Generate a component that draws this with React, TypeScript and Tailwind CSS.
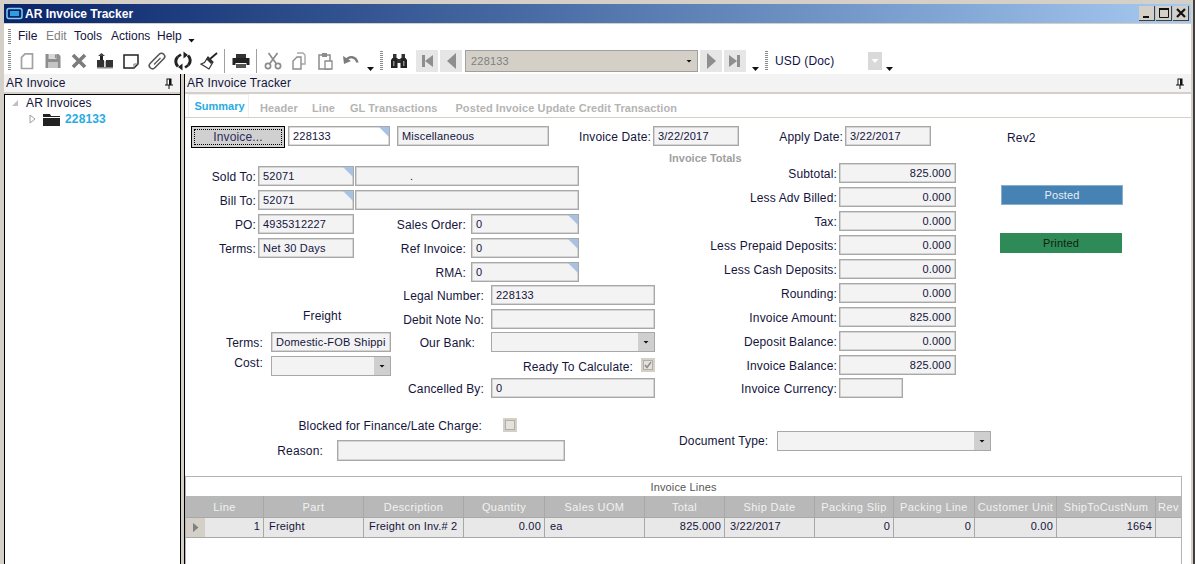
import React from "react";

const grip = (
  <div className="w-[3px] h-[20px] shrink-0 bg-[repeating-linear-gradient(to_bottom,#8a8a8a_0,#8a8a8a_1px,#ffffff_1px,#ffffff_2px)]" />
);

const Ico = ({ children }: { children: React.ReactNode }) => (
  <div className="w-[26px] h-[26px] shrink-0 flex items-center justify-center">
    <svg width="20" height="20" viewBox="0 0 20 20">{children}</svg>
  </div>
);

const MiniArrow = () => (
  <div className="w-[7px] h-[4px] shrink-0 self-end mb-[3px] [clip-path:polygon(0_0,100%_0,50%_100%)] bg-[#111]" />
);

const Sep = () => <div className="w-px h-[24px] shrink-0 bg-[#a0a0a0]" />;

const NavBtn = ({ children }: { children: React.ReactNode }) => (
  <div className="w-[22px] h-[22px] bg-[#e6e6e6] flex items-center justify-center shrink-0">
    <svg width="20" height="20" viewBox="0 0 20 20">{children}</svg>
  </div>
);

function Toolbar() {
  return (
    <div className="h-[28px] shrink-0 flex items-center bg-white pl-[4px] pt-[2px]">
      {grip}
      <div className="w-[3px] shrink-0" />
      <Ico><path d="M8 2.800h7.500v14.700H4.500V6.300z" fill="#fff" stroke="#a2a2a2" strokeWidth="1.700" /></Ico>
      <Ico>
        <path d="M2.500 3h13l2 2v12h-15z" fill="#8e8e8e" />
        <rect x="5.500" y="3" width="8" height="5" fill="#d8d8d8" />
        <rect x="12" y="3.500" width="1.500" height="3.500" fill="#8e8e8e" />
        <rect x="5" y="11" width="10" height="6" fill="#c4c4c4" />
      </Ico>
      <Ico><path d="M4 4l12 12M16 4L4 16" stroke="#7c7c7c" strokeWidth="3.600" /></Ico>
      <Ico>
        <path d="M2 9h7v8H2zM11 9h7v8h-7z" fill="#333" />
        <path d="M5 4h3v5H5z" fill="#222" />
        <path d="M3 5l3.500-3L10 5z" fill="#444" />
        <path d="M2 16h16v1.500H2z" fill="#888" />
        <path d="M9.500 10h1.500v6H9.500z" fill="#bbb" />
      </Ico>
      <Ico>
        <path d="M3 4h14v9l-4 4H3z" fill="#fff" stroke="#222" strokeWidth="1.500" />
        <path d="M13 17v-4h4" fill="none" stroke="#777" strokeWidth="1" />
      </Ico>
      <Ico>
        <rect x="6.800" y="0.500" width="6.400" height="19" rx="3.200" transform="rotate(45 10 10)" fill="none" stroke="#555" strokeWidth="1.600" />
        <path d="M7 13.500l6.500-6.500" stroke="#555" strokeWidth="1.300" />
      </Ico>
      <Ico>
        <path d="M5 15.500A6.800 6.800 0 0 1 4.500 6" fill="none" stroke="#222" strokeWidth="3" />
        <path d="M4.500 6L8 3.500" fill="none" stroke="#222" strokeWidth="2.400" />
        <path d="M10.500 0.500l4.500 3.500-4.500 3.500z" fill="#222" />
        <path d="M15 4.500A6.800 6.800 0 0 1 15.500 14" fill="none" stroke="#222" strokeWidth="3" />
        <path d="M15.500 14L12 16.500" fill="none" stroke="#222" strokeWidth="2.400" />
        <path d="M9.500 19.500L5 16l4.500-3.500z" fill="#222" />
      </Ico>
      <Ico>
        <path d="M11 8l7-6" stroke="#222" strokeWidth="1.800" />
        <path d="M9 6l5 5-4 7-8-5 3.500-1.500z" fill="#fff" stroke="#333" strokeWidth="1.200" />
        <path d="M9 6l5 5-2 2-5-5z" fill="#333" />
      </Ico>
      <div className="w-[2px] shrink-0" />
      <Sep />
      <div className="w-[3px] shrink-0" />
      <Ico>
        <path d="M5 3h10v4H5z" fill="#333" />
        <path d="M1.500 7h17v7h-3v-2h-11v2h-3z" fill="#222" />
        <path d="M5 13h10v4H5z" fill="#555" />
      </Ico>
      <div className="w-[2px] shrink-0" />
      <Sep />
      <div className="w-[3px] shrink-0" />
      <Ico>
        <path d="M5.500 2l8 11M14.500 2l-8 11" stroke="#8c8c8c" strokeWidth="1.700" />
        <circle cx="5" cy="15" r="2.600" fill="none" stroke="#8c8c8c" strokeWidth="1.700" />
        <circle cx="15" cy="15" r="2.600" fill="none" stroke="#8c8c8c" strokeWidth="1.700" />
      </Ico>
      <Ico>
        <path d="M8 2h6l2 2v9h-4" fill="#fff" stroke="#a8a8a8" strokeWidth="1.400" />
        <path d="M8 6L4 10v8h8V6z" fill="#fff" stroke="#8c8c8c" strokeWidth="1.400" />
      </Ico>
      <Ico>
        <path d="M4 4h11v14H4z" fill="#fff" stroke="#8c8c8c" strokeWidth="1.500" />
        <path d="M7 2h5v4H7z" fill="#8c8c8c" />
        <path d="M10 10h7v8h-7z" fill="#fff" stroke="#8c8c8c" strokeWidth="1.300" />
      </Ico>
      <Ico>
        <path d="M5 9.500c3-5 9.500-4.500 11.500 2" fill="none" stroke="#7c7c7c" strokeWidth="2.400" />
        <path d="M2 5l1 8 7-3z" fill="#7c7c7c" />
      </Ico>
      <div className="w-[3px] shrink-0" />
      <MiniArrow />
      <div className="w-[6px] shrink-0" />
      {grip}
      <div className="w-[3px] shrink-0" />
      <Ico>
        <path d="M2 9l1.500-2h5V17H2zM11.500 7h5L18 9v8h-6.500z" fill="#222" />
        <path d="M4 3h3.500v4H4zM12.500 3H16v4h-3.500zM8 8h4v4H8z" fill="#333" />
        <path d="M4 10h1.500v5H4zM14 10h1.500v5H14z" fill="#8a8a8a" />
      </Ico>
      <div className="w-[4px] shrink-0" />
      <NavBtn><path d="M5 4h3v12H5zM16 4v12l-8-6z" fill="#8e8e8e" /></NavBtn>
      <div className="w-[2px] shrink-0" />
      <NavBtn><path d="M15 2v16L6 10z" fill="#8e8e8e" /></NavBtn>
      <div className="ml-[3px] w-[233px] h-[22px] shrink-0 bg-[#d4d0c8] border border-[#a0a0a0] flex items-center pl-[5px] pr-[5px] text-[11px] tracking-[0.2px] text-[#808080]">
        <span className="flex-1">228133</span>
        <div className="w-[6px] h-[3px] [clip-path:polygon(0_0,100%_0,50%_100%)] bg-[#111]" />
      </div>
      <div className="w-[2px] shrink-0" />
      <NavBtn><path d="M6 2v16l9-8z" fill="#8e8e8e" /></NavBtn>
      <div className="w-[2px] shrink-0" />
      <NavBtn><path d="M4 4v12l8-6zM12 4h3v12h-3z" fill="#8e8e8e" /></NavBtn>
      <div className="w-[6px] shrink-0" />
      <MiniArrow />
      <div className="w-[6px] shrink-0" />
      {grip}
      <span className="ml-[7px] w-[93px] shrink-0 text-[#10104a]">USD (Doc)</span>
      <div className="w-[14px] h-[18px] shrink-0 bg-[#d9d9d9] flex items-center justify-center">
        <div className="w-[7px] h-[4px] [clip-path:polygon(0_0,100%_0,50%_100%)] bg-white" />
      </div>
      <div className="w-[4px] shrink-0" />
      <MiniArrow />
    </div>
  );
}

const Pin = () => (
  <svg width="8" height="11" viewBox="0 0 8 11" className="shrink-0">
    <path d="M1.500 0.500h5v6h-5zM0 6.500h8v1H0zM3.500 7.500h1V11h-1z" fill="#111" />
    <path d="M2.500 1.500h1.500v5H2.500z" fill="#fff" />
  </svg>
);

function Field({ v, w, corner, h = 20, white, right, indent = 4 }: { v?: string; w: number; corner?: boolean; h?: number; white?: boolean; right?: boolean; indent?: number }) {
  return (
    <div
      className={`relative shrink-0 border border-[#a8a8a8] shadow-[inset_0_0_0_0.5px_#b8b8b8] flex items-center pr-[4px] text-[11px] tracking-[0.2px] text-[#14143c] overflow-hidden whitespace-nowrap ${white ? "bg-white" : "bg-[#f3f3f3]"} ${right ? "justify-end" : ""}`}
      style={{ width: w, height: h, paddingLeft: indent }}
    >
      {v}
      {corner && <div className="absolute top-0 right-0 w-[10px] h-[10px] bg-[#a9c1e2] [clip-path:polygon(0_0,100%_0,100%_100%)]" />}
    </div>
  );
}

function Combo({ w }: { w: number }) {
  return (
    <div className="shrink-0 h-[20px] border border-[#a8a8a8] bg-[#f3f3f3] flex justify-end" style={{ width: w }}>
      <div className="w-[16px] bg-[#cfcfcf] flex items-center justify-center">
        <div className="w-[6px] h-[3px] [clip-path:polygon(0_0,100%_0,50%_100%)] bg-[#111]" />
      </div>
    </div>
  );
}

function Row({ label, lw, pr = 2, children, cls = "" }: { label: string; lw: number; pr?: number; children: React.ReactNode; cls?: string }) {
  return (
    <div className={`flex items-center h-[20px] ${cls}`}>
      <span className="text-right shrink-0 whitespace-nowrap text-[#14143c] pt-[2px]" style={{ width: lw, paddingRight: pr }}>{label}</span>
      {children}
    </div>
  );
}

const Check = ({ checked }: { checked?: boolean }) => (
  <div className="w-[14px] h-[14px] bg-[#d4d0c8] flex items-center justify-center shrink-0">
    <div className="w-[10px] h-[10px] bg-[#e4e2dc] border border-[#b0aea8] flex items-center justify-center">
      {checked && (
        <svg width="8" height="8" viewBox="0 0 8 8"><path d="M1 4l2 2.500L7 1" fill="none" stroke="#8e8e8e" strokeWidth="1.600" /></svg>
      )}
    </div>
  </div>
);

const TOTALS: [string, string][] = [
  ["Subtotal:", "825.000"],
  ["Less Adv Billed:", "0.000"],
  ["Tax:", "0.000"],
  ["Less Prepaid Deposits:", "0.000"],
  ["Less Cash Deposits:", "0.000"],
  ["Rounding:", "0.000"],
  ["Invoice Amount:", "825.000"],
  ["Deposit Balance:", "0.000"],
  ["Invoice Balance:", "825.000"],
];

const COLS: [string, number, string, boolean][] = [
  ["Line", 59, "1", true],
  ["Part", 100, "Freight", false],
  ["Description", 100, "Freight on Inv.# 2", false],
  ["Quantity", 81, "0.00", true],
  ["Sales UOM", 100, "ea", false],
  ["Total", 80, "825.000", true],
  ["Ship Date", 90, "3/22/2017", false],
  ["Packing Slip", 79, "0", true],
  ["Packing Line", 81, "0", true],
  ["Customer Unit", 82, "0.00", true],
  ["ShipToCustNum", 99, "1664", true],
  ["Rev", 26, "", false],
];

function InvoiceLines() {
  return (
    <div className="mr-[9px] flex-1 border-t border-r border-l border-[#b4b4b4] bg-white flex flex-col">
      <div className="h-[19px] shrink-0 flex items-center justify-center text-[11px] text-[#555] pt-[2px]">Invoice Lines</div>
      <div className="flex h-[21px] shrink-0 bg-[#b8b8b8] text-[11px] tracking-[0.4px] text-[#f2f2f2] overflow-hidden">
        {COLS.map((c, i) => (
          <div key={c[0]} className="shrink-0 border-r border-[#a8a8a8] flex items-center justify-center whitespace-nowrap overflow-hidden pt-[2px]" style={{ width: i === 0 ? c[1] + 19 : c[1] }}>
            {c[0]}
          </div>
        ))}
      </div>
      <div className="flex h-[21px] shrink-0 bg-[#e8e8e8] border-y border-[#a8a8a8] text-[11px] tracking-[0.2px] text-[#14143c] overflow-hidden">
        <div className="w-[19px] shrink-0 bg-[#d4d0c8] flex items-center justify-center">
          <div className="w-[6px] h-[10px] bg-[#808080] [clip-path:polygon(0_0,100%_50%,0_100%)]" />
        </div>
        {COLS.map((c) => (
          <div key={c[0]} className={`shrink-0 border-r border-[#a8a8a8] flex items-center pl-[5px] pr-[3px] pb-[3px] whitespace-nowrap overflow-hidden ${c[3] ? "justify-end" : ""}`} style={{ width: c[1] }}>
            {c[2]}
          </div>
        ))}
      </div>
    </div>
  );
}

function Form() {
  return (
    <div className="flex-1 min-h-0 bg-white flex flex-col overflow-hidden">
      {/* top row */}
      <div className="flex items-start pt-[8px] pl-[6px] h-[34px] shrink-0">
        <div className="w-[94px] h-[22px] bg-[#d0d0d0] border border-black p-[2px] shrink-0">
          <div className="h-full border border-dotted border-black flex items-center justify-center text-[#2c2c5c]">Invoice...</div>
        </div>
        <div className="w-[3px] shrink-0" />
        <Field v="228133" w={102} corner white />
        <div className="w-[7px] shrink-0" />
        <Field v="Miscellaneous" w={152} />
        <Row label="Invoice Date:" lw={104}><Field v="3/22/2017" w={86} /></Row>
        <Row label="Apply Date:" lw={106}><Field v="3/22/2017" w={86} /></Row>
        <span className="ml-[76px] mt-[3px] text-[#14143c]">Rev2</span>
      </div>

      <div className="flex h-[257px] shrink-0">
        {/* left block */}
        <div className="w-[474px] shrink-0 pt-[14px] flex flex-col">
          <div className="flex flex-col gap-[4px]">
            <Row label="Sold To:" lw={73}><Field v="52071" w={96} corner /><div className="w-px" /><Field w={224} v="." indent={54} /></Row>
            <Row label="Bill To:" lw={73}><Field v="52071" w={96} corner /><div className="w-px" /><Field w={224} /></Row>
            <Row label="PO:" lw={73}>
              <Field v="4935312227" w={96} />
              <span className="w-[117px] pr-[5px] pt-[2px] text-right whitespace-nowrap text-[#14143c]">Sales Order:</span>
              <Field v="0" w={108} corner />
            </Row>
            <Row label="Terms:" lw={73}>
              <Field v="Net 30 Days" w={96} />
              <span className="w-[117px] pr-[5px] pt-[2px] text-right whitespace-nowrap text-[#14143c]">Ref Invoice:</span>
              <Field v="0" w={108} corner />
            </Row>
            <Row label="RMA:" lw={286} pr={5}>
              <Field v="0" w={108} corner />
            </Row>
          </div>
          <div className="flex mt-[3px]">
            <div className="w-[206px] shrink-0 pt-[22px] flex flex-col">
              <div className="h-[25px] pl-[118px] text-[#14143c]">Freight</div>
              <Row label="Terms:" lw={86} pr={8}><Field v="Domestic-FOB Shippi" w={120} /></Row>
              <div className="flex items-start h-[20px] mt-[4px]">
                <span className="w-[86px] pr-[8px] pt-px shrink-0 text-right leading-[12px] text-[#14143c]">Cost:</span>
                <Combo w={120} />
              </div>
            </div>
            <div className="flex flex-col">
              <Row label="Legal Number:" lw={100} pr={7}><Field v="228133" w={164} /></Row>
              <Row label="Debit Note No:" lw={100} pr={7} cls="mt-[4px]"><Field w={164} /></Row>
              <Row label="Our Bank:" lw={100} pr={16} cls="mt-[3px]"><Combo w={164} /></Row>
              <div className="flex items-center justify-end h-[16px] mt-[5px] gap-[8px] text-[#14143c]">
                <span className="pt-[3px]">Ready To Calculate:</span>
                <Check checked />
              </div>
              <Row label="Cancelled By:" lw={100} pr={7} cls="mt-[5px]"><Field v="0" w={164} /></Row>
            </div>
          </div>
        </div>

        {/* totals */}
        <div className="w-[298px] shrink-0 flex flex-col items-end">
          <div className="h-[11px] w-full text-[11px] font-bold tracking-[0px] text-[#a0a0a0] pl-[10px] leading-[12px] whitespace-nowrap">Invoice Totals</div>
          <div className="flex flex-col gap-[4px] w-full">
            {TOTALS.map(([l, v]) => (
              <Row key={l} label={l} lw={180}><Field v={v} w={117} right /></Row>
            ))}
            <Row label="Invoice Currency:" lw={180} cls="-mt-px"><Field w={64} /></Row>
          </div>
        </div>

        {/* status */}
        <div className="pl-[43px] pt-[33px] flex flex-col text-[11px]">
          <div className="ml-px w-[122px] h-[20px] bg-[#4682b4] border border-[#8ab0d0] flex items-center justify-center text-[#e8eef4]">Posted</div>
          <div className="mt-[28px] w-[122px] h-[20px] bg-[#2e8b57] flex items-center justify-center text-[#102010]">Printed</div>
        </div>
      </div>

      {/* bottom of the form */}
      <div className="flex h-[67px] shrink-0">
        <div className="w-[494px] shrink-0 flex flex-col">
          <div className="flex items-center h-[14px] mt-[9px] text-[#14143c]">
            <span className="w-[297px] text-right whitespace-nowrap pt-[2px]">Blocked for Finance/Late Charge:</span>
            <div className="w-[21px] shrink-0" />
            <Check />
          </div>
          <div className="flex items-center h-[21px] mt-[8px] text-[#14143c]">
            <span className="w-[138px] text-right whitespace-nowrap">Reason:</span>
            <div className="w-[14px] shrink-0" />
            <Field w={228} h={21} />
          </div>
        </div>
        <div className="flex items-center h-[20px] mt-[22px] text-[#14143c]">
          <span className="whitespace-nowrap w-[98px]">Document Type:</span>
          <Combo w={214} />
        </div>
      </div>

      <InvoiceLines />
    </div>
  );
}

const WinBtn = ({ children }: { children: React.ReactNode }) => (
  <div className="w-[16px] h-[15px] shrink-0 bg-[#d4d0c8] border-r border-b border-[#404040] flex items-center justify-center">
    <svg width="14" height="14" viewBox="0 0 14 14">{children}</svg>
  </div>
);

export default function App() {
  return (
    <div className="w-[1195px] h-[564px] overflow-hidden bg-[#d4d0c8] pt-[4px] pl-[4px] pr-[2px] border-r-[2px] border-[#404040] flex flex-col text-[12px] text-[#14143c] font-['Liberation_Sans',Arial,sans-serif] tracking-[0.15px]">
      {/* title bar */}
      <div className="h-[19px] shrink-0 bg-gradient-to-r from-[#0a246a] to-[#a6caf0] flex items-center pl-[2px] pr-[2px]">
        <svg width="17" height="13" viewBox="0 0 17 13" className="shrink-0">
          <rect x="1" y="1.500" width="15" height="10" rx="2" fill="#0a246a" stroke="#7fd0f0" strokeWidth="1.500" />
          <rect x="4" y="4" width="9" height="5" fill="#2f9fe0" />
        </svg>
        <span className="ml-[2px] flex-1 text-white font-bold text-[12px] tracking-[0px]">AR Invoice Tracker</span>
        <WinBtn><path d="M3 10h6v2H3z" fill="#111" /></WinBtn>
        <div className="w-px shrink-0" />
        <WinBtn><path d="M2.500 2.500h9v9h-9z" fill="none" stroke="#111" strokeWidth="1" /><path d="M2 2h10v2H2z" fill="#111" /></WinBtn>
        <div className="w-px shrink-0" />
        <WinBtn><path d="M3 3l8 8M11 3l-8 8" stroke="#111" strokeWidth="2.200" /></WinBtn>
      </div>
      <div className="h-px shrink-0" />

      {/* menu */}
      <div className="h-[22px] shrink-0 bg-white flex items-center pl-[4px] pt-[2px] tracking-[0px]">
        <div className="w-[3px] h-[15px] shrink-0 bg-[repeating-linear-gradient(to_bottom,#8a8a8a_0,#8a8a8a_1px,#ffffff_1px,#ffffff_2px)]" />
        <span className="ml-[7px] w-[28px] text-[#14143c]">File</span>
        <span className="w-[28px] text-[#808080]">Edit</span>
        <span className="w-[37px] text-[#14143c]">Tools</span>
        <span className="w-[46px] text-[#14143c]">Actions</span>
        <span className="w-[31px] text-[#14143c]">Help</span>
        <div className="w-[7px] h-[4px] mt-[9px] [clip-path:polygon(0_0,100%_0,50%_100%)] bg-[#111]" />
      </div>

      <Toolbar />

      {/* dock panels */}
      <div className="flex-1 min-h-0 flex">
        <div className="w-[177px] shrink-0 flex flex-col border-r border-black">
          <div className="h-[18px] bg-[#f3f3f3] flex items-center justify-between px-[2px] pr-[7px] text-[#14143c]">
            <span>AR Invoice</span>
            <Pin />
          </div>
          <div className="h-[2px] bg-[#d4d0c8]" />
          <div className="flex-1 bg-white border-t border-l border-black">
            <div className="flex items-center h-[16px] pl-[7px] text-[#14143c]">
              <div className="w-[6px] h-[6px] mr-[8px] [clip-path:polygon(100%_0,100%_100%,0_100%)] bg-[#c0c0c0]" />
              <span>AR Invoices</span>
            </div>
            <div className="flex items-center h-[16px] pl-[24px]">
              <svg width="7" height="10" viewBox="0 0 7 10" className="shrink-0"><path d="M1 1l5 4-5 4z" fill="#fff" stroke="#a0a0a0" /></svg>
              <svg width="17" height="13" viewBox="0 0 17 13" className="ml-[7px] shrink-0"><path d="M0 1h7l1 2h9v10H0z" fill="#222" /><path d="M0 4h17v1H0z" fill="#fff" /></svg>
              <span className="ml-[5px] font-bold text-[#29abe2]">228133</span>
            </div>
          </div>
        </div>
        <div className="w-[3px] shrink-0" />
        <div className="flex-1 min-w-0 flex flex-col border-l border-black">
          <div className="h-[18px] shrink-0 bg-[#f3f3f3] flex items-center justify-between pl-[2px] pr-[7px] text-[#14143c]">
            <span>AR Invoice Tracker</span>
            <Pin />
          </div>
          <div className="h-[2px] shrink-0 bg-[#d4d0c8]" />
          <div className="h-[24px] shrink-0 bg-white flex items-center font-bold text-[11px] tracking-[0.1px] text-[#b4b4b4] border-b border-[#d4d0c8] pl-[3px]">
            <div className="w-[61px] h-full flex items-center justify-center text-[#29abe2] border-x border-t border-[#f0f0f0] tracking-[0px] pl-[2px]">Summary</div>
            <span className="ml-[11px] pt-[5px]">Header</span>
            <span className="ml-[14px] pt-[5px]">Line</span>
            <span className="ml-[15px] pt-[5px]">GL Transactions</span>
            <span className="ml-[18px] pt-[5px]">Posted Invoice Update Credit Transaction</span>
          </div>
          <Form />
        </div>
      </div>
    </div>
  );
}
